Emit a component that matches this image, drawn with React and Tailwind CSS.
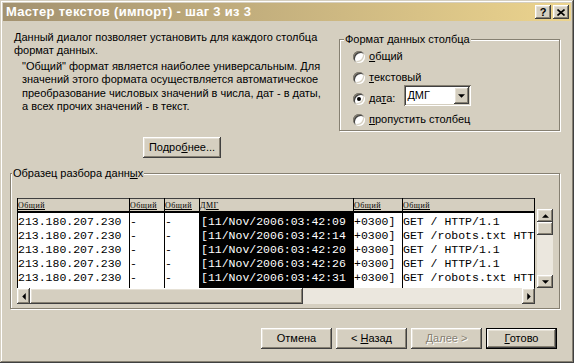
import React from 'react';

// classic 3D bevels
const raised = 'shadow-[inset_-1px_-1px_0_#404040,inset_1px_1px_0_#ffffff,inset_-2px_-2px_0_#868072,inset_2px_2px_0_#e6e1d6]';
const sunken = 'shadow-[inset_1px_1px_0_#868072,inset_-1px_-1px_0_#ffffff,inset_2px_2px_0_#404040,inset_-2px_-2px_0_#d5cfc0]';
const etched = 'border border-[#868072] shadow-[inset_1px_1px_0_#ffffff,1px_1px_0_#ffffff]';

const ip = Array(5).fill('213.180.207.230');
const dash = Array(5).fill('-');
const dates = ['09', '14', '20', '26', '31'].map(s => `[11/Nov/2006:03:42:${s}`);
const tz = Array(5).fill('+0300]');
const req = ['GET / HTTP/1.1', 'GET /robots.txt HTTP/1.1', 'GET / HTTP/1.1', 'GET / HTTP/1.1', 'GET /robots.txt HTTP/1.1'];

const cols = [
  { w: 'w-[112px]', head: 'Общий', rows: ip },
  { w: 'w-[35px]', head: 'Общий', rows: dash },
  { w: 'w-[35px]', head: 'Общий', rows: dash },
  { w: 'w-[154px]', head: 'ДМГ', rows: dates, sel: true },
  { w: 'w-[49px]', head: 'Общий', rows: tz },
  { w: 'w-[133px] border-r', head: 'Общий', rows: req },
];

function Arrow({ dir }) {
  const pts = {
    up: '0,3 3,0 6,3',
    down: '0,0 6,0 3,3',
    left: '3,0 3,6 0,3',
    right: '0,0 0,6 3,3',
  }[dir];
  const vert = dir === 'up' || dir === 'down';
  return (
    <svg width={vert ? 7 : 4} height={vert ? 4 : 7} viewBox={vert ? '0 0 6 3' : '0 0 3 6'}>
      <polygon points={pts} fill="#000" />
    </svg>
  );
}

function Button({ children, className = '', def, disabled }) {
  return (
    <div className={`w-[71px] h-[21px] flex items-center justify-center bg-[#d5cfc0] ${def ? 'border border-black' : ''} ${className}`}>
      <div className={`w-full h-full flex items-center justify-center ${raised} ${disabled ? 'text-[#868072] [text-shadow:1px_1px_0_#ffffff]' : ''}`}>
        <span className="whitespace-pre">{children}</span>
      </div>
    </div>
  );
}

function Radio({ checked, children, extra }) {
  return (
    <div className="h-[21px] flex items-center">
      <div className="w-[12px] h-[12px] rounded-full bg-white flex items-center justify-center shadow-[inset_1px_1px_0_#868072,inset_-1px_-1px_0_#ffffff,inset_2px_2px_0_#404040,inset_-2px_-2px_0_#d5cfc0]">
        {checked && <div className="w-[4px] h-[4px] rounded-full bg-black" />}
      </div>
      <span className="ml-[4px]">{children}</span>
      {extra}
    </div>
  );
}

export default function App() {
  return (
    <div className="w-[574px] h-[363px] bg-[#d5cfc0] p-[3px] flex flex-col overflow-hidden text-black text-[11px] font-['Liberation_Sans',sans-serif] shadow-[inset_-1px_-1px_0_#404040,inset_1px_1px_0_#d5cfc0,inset_-2px_-2px_0_#868072,inset_2px_2px_0_#ffffff]">

      {/* Title bar */}
      <div className="h-[18px] flex items-center pl-[3px] pr-[2px] bg-linear-to-r from-[#a39270] to-[#ecd48e]">
        <span className="text-white font-bold text-[13px] tracking-[0.3px] whitespace-nowrap">Мастер текстов (импорт) - шаг 3 из 3</span>
        <div className="ml-auto flex gap-[2px]">
          <div className={`w-[16px] h-[14px] bg-[#d5cfc0] flex items-center justify-center font-bold text-[11px] leading-none ${raised}`}>?</div>
          <div className={`w-[16px] h-[14px] bg-[#d5cfc0] flex items-center justify-center ${raised}`}>
            <svg width="8" height="7" viewBox="0 0 8 7">
              <path d="M0.5 0.5 L7.5 6.5 M7.5 0.5 L0.5 6.5" stroke="#000" strokeWidth="1.6" />
            </svg>
          </div>
        </div>
      </div>

      {/* Top area */}
      <div className="flex items-start">
        <div className="mt-[10px] ml-[11px] flex flex-col">
          <p className="leading-[13px] whitespace-nowrap">
            Данный диалог позволяет установить для каждого столбца<br />формат данных.
          </p>
          <p className="mt-[3px] ml-[8px] leading-[13.3px] whitespace-nowrap">
            "Общий" формат является наиболее универсальным. Для<br />
            значений этого формата осуществляется автоматическое<br />
            преобразование числовых значений в числа, дат - в даты,<br />
            а всех прочих значений - в текст.
          </p>
          <Button className="mt-[24px] ml-[129px] !w-[78px]">
            Подро<u>б</u>нее...
          </Button>
        </div>

        <fieldset className={`ml-auto mr-[11px] mt-[12px] w-[221px] ${etched}`}>
          <legend className="ml-[4px] px-[1px] leading-[13px] bg-[#d5cfc0]">Формат данных столбца</legend>
          <div className="pl-[13px]">
            <Radio><u>о</u>бщий</Radio>
            <Radio><u>т</u>екстовый</Radio>
            <Radio
              checked
              extra={
                <div className={`ml-[9px] self-start -mt-[3px] w-[67px] h-[21px] bg-white flex items-center p-[2px] ${sunken}`}>
                  <span className="pl-[1px] flex-1">ДМГ</span>
                  <div className={`w-[15px] h-[17px] bg-[#d5cfc0] flex items-center justify-center ${raised}`}>
                    <Arrow dir="down" />
                  </div>
                </div>
              }
            >
              да<u>т</u>а:
            </Radio>
            <Radio><u>п</u>ропустить столбец</Radio>
          </div>
        </fieldset>
      </div>

      {/* Data preview */}
      <fieldset className={`mt-[9px] ml-[7px] mr-[11px] ${etched}`}>
        <legend className="ml-[1px] px-[1px] leading-[13px] bg-[#d5cfc0]">Образец разбора данн<u>ы</u>х</legend>
        <div className="pt-[18px] pl-[6px] pb-[4px] flex items-start">
          <div className="w-[518px] flex flex-col">
            <div className="flex">
              {cols.map((c, i) => (
                <div key={i} className={`${c.w} border-l border-black flex flex-col shrink-0`}>
                  <div className="h-[15px] border-t border-t-[#404040] border-b-2 border-b-black bg-[#d5cfc0] flex items-end pb-[1px]">
                    <span className="text-[8px] leading-[8px] tracking-[0.5px] underline font-['Liberation_Serif',serif] whitespace-nowrap overflow-hidden">{c.head}</span>
                  </div>
                  <div className={`h-[75px] pt-[2px] overflow-hidden font-['Liberation_Mono',monospace] text-[11.5px] leading-[14px] whitespace-nowrap ${c.sel ? 'bg-black text-white pl-[1px]' : 'bg-white'}`}>
                    {c.rows.map((r, j) => <div key={j}>{r}</div>)}
                  </div>
                </div>
              ))}
            </div>
            <div className="h-[16px] flex">
              <div className={`w-[13px] bg-[#d5cfc0] flex items-center justify-center ${raised}`}><Arrow dir="left" /></div>
              <div className={`w-[273px] bg-[#d5cfc0] ${raised}`} />
              <div className="flex-1 bg-[#ebe7de]" />
              <div className={`w-[13px] bg-[#d5cfc0] flex items-center justify-center ${raised}`}><Arrow dir="right" /></div>
            </div>
          </div>
          <div className="ml-[2px] mt-[11px] w-[16px] h-[79px] flex flex-col">
            <div className={`h-[13px] bg-[#d5cfc0] flex items-center justify-center ${raised}`}><Arrow dir="up" /></div>
            <div className={`h-[13px] bg-[#d5cfc0] ${raised}`} />
            <div className="flex-1 bg-[#ebe7de]" />
            <div className={`h-[13px] bg-[#d5cfc0] flex items-center justify-center ${raised}`}><Arrow dir="down" /></div>
          </div>
        </div>
      </fieldset>

      {/* Buttons */}
      <div className="mt-[19px] mr-[14px] flex justify-end gap-[4px]">
        <Button>Отмена</Button>
        <Button>&lt; <u>Н</u>азад</Button>
        <Button disabled><u>Д</u>алее &gt;</Button>
        <Button def><u>Г</u>отово</Button>
      </div>
    </div>
  );
}
